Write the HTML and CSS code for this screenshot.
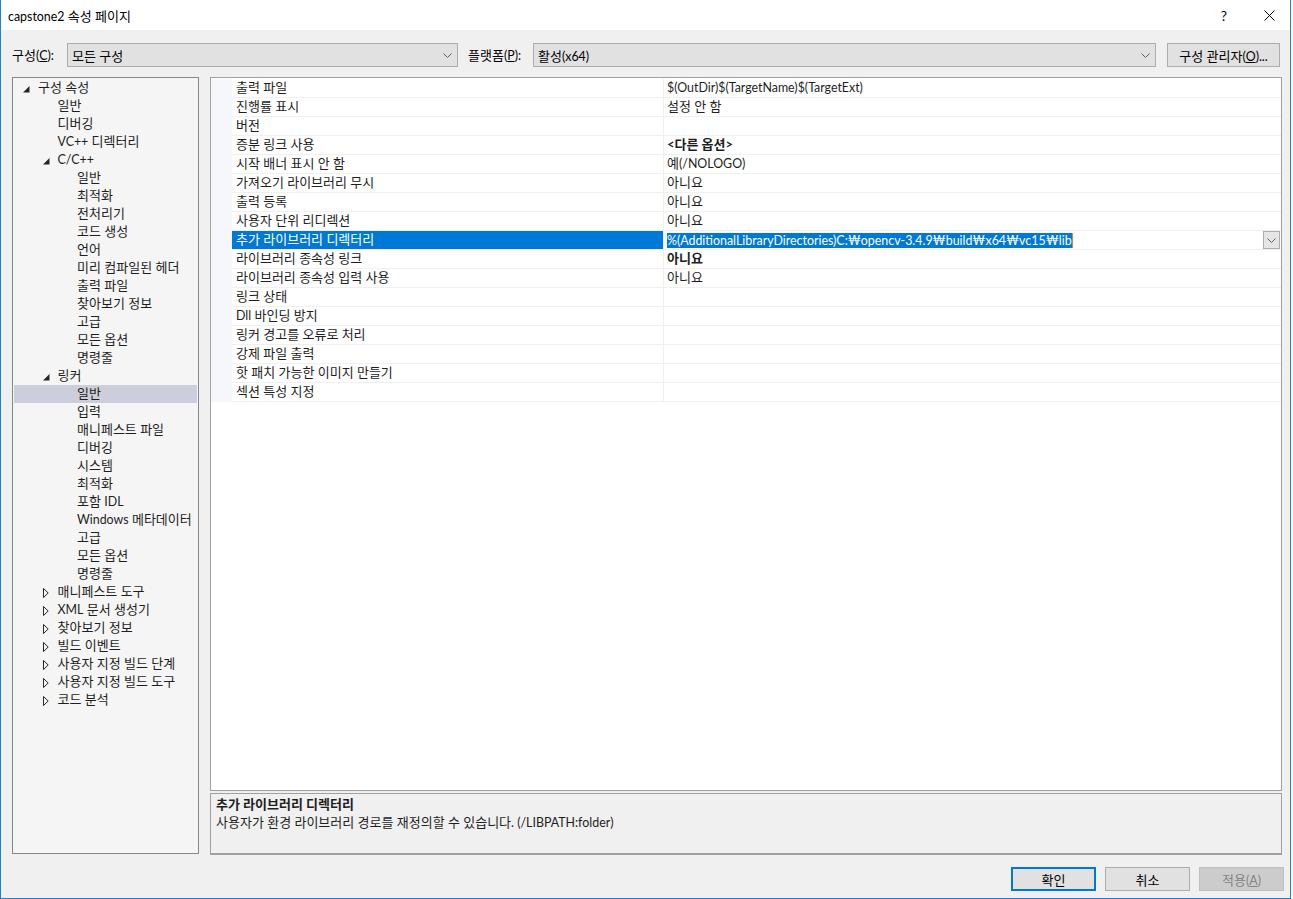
FILE: index.html
```html
<!DOCTYPE html>
<html lang="ko">
<head>
<meta charset="utf-8">
<title>capstone2 속성 페이지</title>
<link rel="stylesheet" href="styles.css">
</head>
<body>
<div class="window">
  <div class="titlebar">
    <span class="title"><span class="en">capstone2</span> 속성 페이지</span>
    <span class="help">?</span>
    <span class="close"><svg width="11" height="11" viewBox="0 0 11 11"><path d="M0.5 0.5 L10.5 10.5 M10.5 0.5 L0.5 10.5" stroke="#000" stroke-width="1" fill="none"/></svg></span>
  </div>

  <div class="toolbar">
    <span class="lbl lbl-config">구성<span class="en">(<u>C</u>):</span></span>
    <div class="combo combo-config"><span>모든 구성</span><svg class="chev" width="9" height="5" viewBox="0 0 9 5"><path d="M0.5 0.5 L4.5 4.5 L8.5 0.5" stroke="#606060" fill="none"/></svg></div>
    <span class="lbl lbl-platform">플랫폼<span class="en">(<u>P</u>):</span></span>
    <div class="combo combo-platform"><span>활성<span class="en">(x64)</span></span><svg class="chev" width="9" height="5" viewBox="0 0 9 5"><path d="M0.5 0.5 L4.5 4.5 L8.5 0.5" stroke="#606060" fill="none"/></svg></div>
    <button class="btn btn-manager">구성 관리자<span class="en">(<u>O</u>)...</span></button>
  </div>

  <div class="main">
    <div class="tree">
      <div class="node l0"><span class="tw"><svg class="exp" width="7" height="7" viewBox="0 0 7 7"><polygon points="6.5,0 6.5,6.5 0,6.5" fill="#262626"/></svg></span><span>구성 속성</span></div>
      <div class="node l1"><span class="tw"></span><span>일반</span></div>
      <div class="node l1"><span class="tw"></span><span>디버깅</span></div>
      <div class="node l1"><span class="tw"></span><span><span class="en">VC++</span> 디렉터리</span></div>
      <div class="node l1"><span class="tw"><svg class="exp" width="7" height="7" viewBox="0 0 7 7"><polygon points="6.5,0 6.5,6.5 0,6.5" fill="#262626"/></svg></span><span class="en">C/C++</span></div>
      <div class="node l2"><span class="tw"></span><span>일반</span></div>
      <div class="node l2"><span class="tw"></span><span>최적화</span></div>
      <div class="node l2"><span class="tw"></span><span>전처리기</span></div>
      <div class="node l2"><span class="tw"></span><span>코드 생성</span></div>
      <div class="node l2"><span class="tw"></span><span>언어</span></div>
      <div class="node l2"><span class="tw"></span><span>미리 컴파일된 헤더</span></div>
      <div class="node l2"><span class="tw"></span><span>출력 파일</span></div>
      <div class="node l2"><span class="tw"></span><span>찾아보기 정보</span></div>
      <div class="node l2"><span class="tw"></span><span>고급</span></div>
      <div class="node l2"><span class="tw"></span><span>모든 옵션</span></div>
      <div class="node l2"><span class="tw"></span><span>명령줄</span></div>
      <div class="node l1"><span class="tw"><svg class="exp" width="7" height="7" viewBox="0 0 7 7"><polygon points="6.5,0 6.5,6.5 0,6.5" fill="#262626"/></svg></span><span>링커</span></div>
      <div class="node l2 selected"><span class="tw"></span><span>일반</span></div>
      <div class="node l2"><span class="tw"></span><span>입력</span></div>
      <div class="node l2"><span class="tw"></span><span>매니페스트 파일</span></div>
      <div class="node l2"><span class="tw"></span><span>디버깅</span></div>
      <div class="node l2"><span class="tw"></span><span>시스템</span></div>
      <div class="node l2"><span class="tw"></span><span>최적화</span></div>
      <div class="node l2"><span class="tw"></span><span>포함 <span class="en">IDL</span></span></div>
      <div class="node l2"><span class="tw"></span><span><span class="en">Windows</span> 메타데이터</span></div>
      <div class="node l2"><span class="tw"></span><span>고급</span></div>
      <div class="node l2"><span class="tw"></span><span>모든 옵션</span></div>
      <div class="node l2"><span class="tw"></span><span>명령줄</span></div>
      <div class="node l1"><span class="tw"><svg class="col" width="6" height="10" viewBox="0 0 6 10"><polygon points="0.5,0.5 5.2,5 0.5,9.5" fill="none" stroke="#262626"/></svg></span><span>매니페스트 도구</span></div>
      <div class="node l1"><span class="tw"><svg class="col" width="6" height="10" viewBox="0 0 6 10"><polygon points="0.5,0.5 5.2,5 0.5,9.5" fill="none" stroke="#262626"/></svg></span><span><span class="en">XML</span> 문서 생성기</span></div>
      <div class="node l1"><span class="tw"><svg class="col" width="6" height="10" viewBox="0 0 6 10"><polygon points="0.5,0.5 5.2,5 0.5,9.5" fill="none" stroke="#262626"/></svg></span><span>찾아보기 정보</span></div>
      <div class="node l1"><span class="tw"><svg class="col" width="6" height="10" viewBox="0 0 6 10"><polygon points="0.5,0.5 5.2,5 0.5,9.5" fill="none" stroke="#262626"/></svg></span><span>빌드 이벤트</span></div>
      <div class="node l1"><span class="tw"><svg class="col" width="6" height="10" viewBox="0 0 6 10"><polygon points="0.5,0.5 5.2,5 0.5,9.5" fill="none" stroke="#262626"/></svg></span><span>사용자 지정 빌드 단계</span></div>
      <div class="node l1"><span class="tw"><svg class="col" width="6" height="10" viewBox="0 0 6 10"><polygon points="0.5,0.5 5.2,5 0.5,9.5" fill="none" stroke="#262626"/></svg></span><span>사용자 지정 빌드 도구</span></div>
      <div class="node l1"><span class="tw"><svg class="col" width="6" height="10" viewBox="0 0 6 10"><polygon points="0.5,0.5 5.2,5 0.5,9.5" fill="none" stroke="#262626"/></svg></span><span>코드 분석</span></div>
    </div>

    <div class="right">
      <div class="grid">
        <div class="row"><div class="gut"></div><div class="name">출력 파일</div><div class="val"><span class="en">$(OutDir)$(TargetName)$(TargetExt)</span></div></div>
        <div class="row"><div class="gut"></div><div class="name">진행률 표시</div><div class="val">설정 안 함</div></div>
        <div class="row"><div class="gut"></div><div class="name">버전</div><div class="val"></div></div>
        <div class="row"><div class="gut"></div><div class="name">증분 링크 사용</div><div class="val bold">&lt;다른 옵션&gt;</div></div>
        <div class="row"><div class="gut"></div><div class="name">시작 배너 표시 안 함</div><div class="val">예<span class="en">(/NOLOGO)</span></div></div>
        <div class="row"><div class="gut"></div><div class="name">가져오기 라이브러리 무시</div><div class="val">아니요</div></div>
        <div class="row"><div class="gut"></div><div class="name">출력 등록</div><div class="val">아니요</div></div>
        <div class="row"><div class="gut"></div><div class="name">사용자 단위 리디렉션</div><div class="val">아니요</div></div>
        <div class="row active"><div class="gut"></div><div class="name">추가 라이브러리 디렉터리</div><div class="val edit"><span class="seltext en">%(AdditionalLibraryDirectories)C:₩opencv-3.4.9₩build₩x64₩vc15₩lib</span><span class="caret"></span><span class="ddbtn"><svg width="9" height="5" viewBox="0 0 9 5"><path d="M0.5 0.5 L4.5 4.5 L8.5 0.5" stroke="#606060" fill="none"/></svg></span></div></div>
        <div class="row"><div class="gut"></div><div class="name">라이브러리 종속성 링크</div><div class="val bold">아니요</div></div>
        <div class="row"><div class="gut"></div><div class="name">라이브러리 종속성 입력 사용</div><div class="val">아니요</div></div>
        <div class="row"><div class="gut"></div><div class="name">링크 상태</div><div class="val"></div></div>
        <div class="row"><div class="gut"></div><div class="name"><span class="en">Dll</span> 바인딩 방지</div><div class="val"></div></div>
        <div class="row"><div class="gut"></div><div class="name">링커 경고를 오류로 처리</div><div class="val"></div></div>
        <div class="row"><div class="gut"></div><div class="name">강제 파일 출력</div><div class="val"></div></div>
        <div class="row"><div class="gut"></div><div class="name">핫 패치 가능한 이미지 만들기</div><div class="val"></div></div>
        <div class="row"><div class="gut"></div><div class="name">섹션 특성 지정</div><div class="val"></div></div>
      </div>
      <div class="desc">
        <div class="desc-title">추가 라이브러리 디렉터리</div>
        <div class="desc-text">사용자가 환경 라이브러리 경로를 재정의할 수 있습니다<span class="en">. (/LIBPATH:folder)</span></div>
      </div>
    </div>
  </div>

  <div class="footer">
    <button class="btn btn-ok">확인</button>
    <button class="btn btn-cancel">취소</button>
    <button class="btn btn-apply">적용<span class="en">(<u>A</u>)</span></button>
  </div>
</div>
</body>
</html>
```
FILE: styles.css
```css
html, body {
  margin: 0;
  padding: 0;
  background: #ffffff;
}
body {
  font-family: "Lato", "Noto Sans", "Noto Sans CJK KR", sans-serif;
  font-size: 13px;
  color: #000;
}
.en {
  font-size: 12.4px;
}
.window {
  width: 1291px;
  height: 899px;
  box-sizing: border-box;
  border: 1px solid #1883d7;
  border-top: none;
  background: #f0f0f0;
  display: flex;
  flex-direction: column;
}
.titlebar {
  height: 30px;
  flex: none;
  background: #fff;
  display: flex;
  align-items: center;
  padding-left: 7px;
}
.help {
  margin-left: auto;
  margin-right: 37px;
  font-size: 14px;
}
.close {
  display: flex;
  margin-right: 15px;
}
.toolbar {
  display: flex;
  align-items: center;
  height: 24px;
  margin-top: 13px;
  padding-left: 11px;
  flex: none;
}
.lbl {
  line-height: 24px;
  white-space: nowrap;
}
.lbl-config { width: 55px; }
.lbl-platform { width: 65px; margin-left: 10px; }
.combo {
  box-sizing: border-box;
  height: 24px;
  background: #e1e1e1;
  border: 1px solid #acacac;
  display: flex;
  align-items: center;
  padding-left: 4px;
  padding-right: 5px;
}
.combo > span { flex: 1; }
.combo-config { width: 391px; }
.combo-platform { width: 623px; }
.chev { flex: none; }
.btn {
  box-sizing: border-box;
  height: 24px;
  background: #e1e1e1;
  border: 1px solid #adadad;
  font-family: inherit;
  font-size: 13px;
  color: #000;
  padding: 0;
  margin: 0;
}
.btn-manager {
  width: 113px;
  margin-left: 11px;
}
.main {
  display: flex;
  margin-top: 10px;
  padding-left: 11px;
  height: 778px;
  flex: none;
}
.tree {
  box-sizing: border-box;
  width: 187px;
  height: 777px;
  background: #f5f5f5;
  border: 1px solid #828790;
  padding: 1px 1px 0 1px;
  overflow: hidden;
}
.node {
  height: 18px;
  line-height: 17px;
  display: flex;
  align-items: flex-start;
  white-space: nowrap;
  color: #1e1e1e;
}
.node.l0 { padding-left: 7px; }
.node.l1 { padding-left: 26.5px; }
.node.l2 { padding-left: 46px; }
.node.selected { background: #cccedb; }
.tw {
  width: 17px;
  height: 18px;
  flex: none;
  display: flex;
  align-items: center;
}
.tw .exp { margin-left: 2px; margin-top: 2px; }
.tw .col { margin-left: 2.5px; margin-top: 1px; }
.right {
  margin-left: 11px;
  width: 1072px;
  display: flex;
  flex-direction: column;
}
.grid {
  box-sizing: border-box;
  height: 714px;
  background: #fff;
  border: 1px solid #a0a0a0;
  padding-top: 1px;
}
.row {
  display: flex;
  height: 19px;
}
.gut {
  width: 21px;
  flex: none;
  background: #f5f7fa;
}
.name, .val {
  box-sizing: border-box;
  height: 19px;
  line-height: 17px;
  border-bottom: 1px solid #f0f0f0;
  white-space: nowrap;
  overflow: hidden;
}
.name {
  width: 431px;
  flex: none;
  padding-left: 4px;
  color: #1e1e1e;
}
.val {
  flex: 1;
  border-left: 1px solid #f0f0f0;
  padding-left: 3px;
  color: #1e1e1e;
}
.val.bold { font-weight: bold; }
.row.active .name {
  background: #0078d7;
  color: #fff;
}
.val.edit {
  display: flex;
  align-items: center;
  padding-right: 1px;
}
.seltext {
  background: #0078d7;
  color: #fff;
  line-height: 15px;
  height: 15px;
}
.caret {
  width: 1px;
  height: 15px;
  background: #e8821e;
}
.ddbtn {
  margin-left: auto;
  box-sizing: border-box;
  width: 17px;
  height: 18px;
  background: #e5e5e5;
  border: 1px solid #adadad;
  display: flex;
  align-items: center;
  justify-content: center;
}
.desc {
  box-sizing: border-box;
  margin-top: 2px;
  height: 62px;
  border: 1px solid #a0a0a0;
  border-bottom: 2px solid #a0a0a0;
  background: #f0f0f0;
  padding: 1px 0 0 5px;
}
.desc-title {
  font-weight: bold;
  line-height: 18px;
  color: #1e1e1e;
}
.desc-text {
  line-height: 19px;
  color: #1e1e1e;
}
.footer {
  display: flex;
  justify-content: flex-end;
  gap: 9px;
  margin-top: 12px;
  padding-right: 6px;
  flex: none;
}
.footer .btn { width: 85px; }
.btn-ok {
  border: 2px solid #0078d7;
}
.btn-apply {
  background: #cccccc;
  border-color: #bfbfbf;
  color: #838383;
}
```
